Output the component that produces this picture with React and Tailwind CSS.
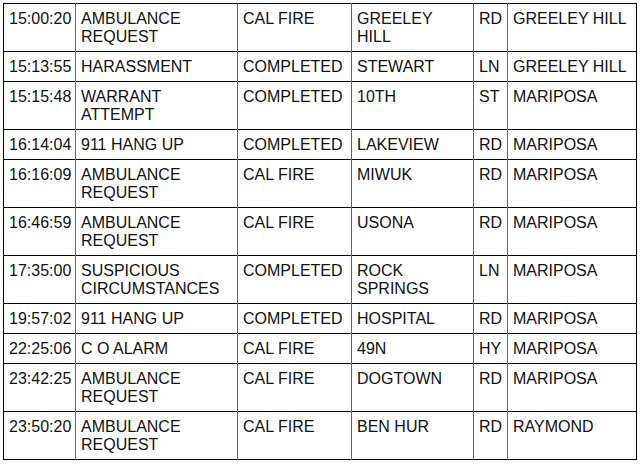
import React from 'react';

const rows = [
  ['15:00:20', 'AMBULANCE REQUEST', 'CAL FIRE', 'GREELEY HILL', 'RD', 'GREELEY HILL'],
  ['15:13:55', 'HARASSMENT', 'COMPLETED', 'STEWART', 'LN', 'GREELEY HILL'],
  ['15:15:48', 'WARRANT ATTEMPT', 'COMPLETED', '10TH', 'ST', 'MARIPOSA'],
  ['16:14:04', '911 HANG UP', 'COMPLETED', 'LAKEVIEW', 'RD', 'MARIPOSA'],
  ['16:16:09', 'AMBULANCE REQUEST', 'CAL FIRE', 'MIWUK', 'RD', 'MARIPOSA'],
  ['16:46:59', 'AMBULANCE REQUEST', 'CAL FIRE', 'USONA', 'RD', 'MARIPOSA'],
  ['17:35:00', 'SUSPICIOUS CIRCUMSTANCES', 'COMPLETED', 'ROCK SPRINGS', 'LN', 'MARIPOSA'],
  ['19:57:02', '911 HANG UP', 'COMPLETED', 'HOSPITAL', 'RD', 'MARIPOSA'],
  ['22:25:06', 'C O ALARM', 'CAL FIRE', '49N', 'HY', 'MARIPOSA'],
  ['23:42:25', 'AMBULANCE REQUEST', 'CAL FIRE', 'DOGTOWN', 'RD', 'MARIPOSA'],
  ['23:50:20', 'AMBULANCE REQUEST', 'CAL FIRE', 'BEN HUR', 'RD', 'RAYMOND'],
];

// column widths, border to border
const widths = ['w-[72px]', 'w-[162px]', 'w-[114px]', 'w-[122px]', 'w-[34px]', 'w-[129px]'];

export default function App() {
  return (
    <div className="bg-white w-[640px] h-[465px] pl-[3px] pt-[3px] font-['Liberation_Sans',Arial,sans-serif] text-[#111]">
      <table className="border-collapse table-fixed w-[633px] border border-black text-[16px] leading-[18px]">
        <colgroup>
          {widths.map((w, i) => (
            <col key={i} className={w} />
          ))}
        </colgroup>
        <tbody>
          {rows.map((r, i) => (
            <tr key={i} className="border-t border-black">
              {r.map((c, j) => (
                <td
                  key={j}
                  className={`align-top pt-[6px] pb-[5px] pl-[5px] pr-[6px] ${j > 0 ? 'border-l border-l-[#666]' : ''}`}
                >
                  {c}
                </td>
              ))}
            </tr>
          ))}
        </tbody>
      </table>
    </div>
  );
}
